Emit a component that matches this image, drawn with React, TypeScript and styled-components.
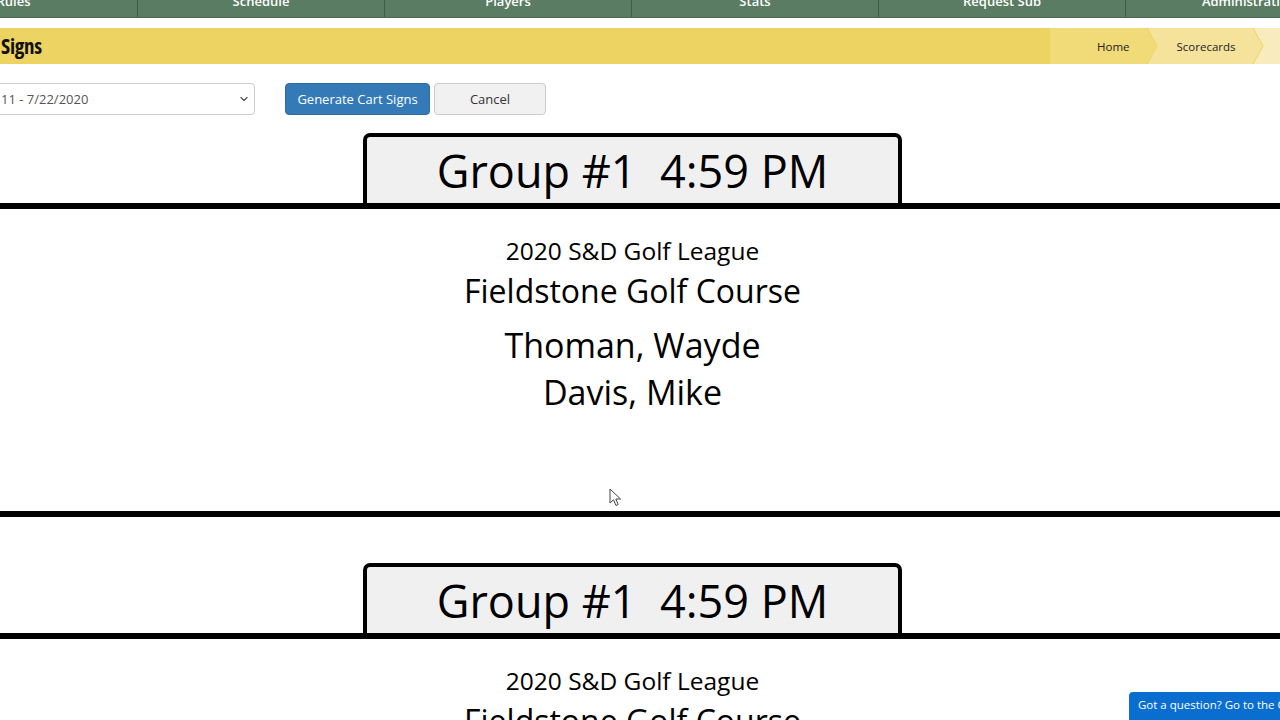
import styled, { createGlobalStyle } from "styled-components"
import { ChevronDown } from "lucide-react"

const GlobalStyle = createGlobalStyle`
    html, body {
        margin: 0;
        padding: 0;
        background: #fff;
        overflow: hidden;
        font-family: "Open Sans", "Liberation Sans", sans-serif;
        color: #111;
    }
`

const navItems = ["Rules", "Schedule", "Players", "Stats", "Request Sub", "Administration"]
const crumbs = [
    { label: "Home", bg: "#f1da78" },
    { label: "Scorecards", bg: "#f5e39c" },
    { label: "Cart Signs", bg: "#f8ebbd" },
]

const signs = [
    { group: 1, time: "4:59 PM", players: ["Thoman, Wayde", "Davis, Mike"] },
    { group: 1, time: "4:59 PM", players: ["Thoman, Wayde", "Davis, Mike"] },
]

export default function App() {
    return (
        <Page>
            <GlobalStyle />
            <Nav>
                {navItems.map((item) => (
                    <NavItem key={item}>{item}</NavItem>
                ))}
            </Nav>
            <TitleBar>
                <Title>Signs</Title>
                <Crumbs>
                    {crumbs.map((c, i) => (
                        <Crumb key={c.label} $bg={c.bg} $first={i === 0}>
                            {c.label}
                        </Crumb>
                    ))}
                </Crumbs>
            </TitleBar>
            <Toolbar>
                <SelectBox>
                    <span>11 - 7/22/2020</span>
                    <ChevronDown size={12} strokeWidth={2.5} color="#555" />
                </SelectBox>
                <Buttons>
                    <Button $primary>Generate Cart Signs</Button>
                    <Button $width={112}>Cancel</Button>
                </Buttons>
            </Toolbar>
            <SignList>
                {signs.map((s, i) => (
                    <Sign key={i}>
                        <TabRow>
                            <Tab>
                                Group #{s.group}&nbsp;&nbsp;{s.time}
                            </Tab>
                        </TabRow>
                        <SignBody>
                            <League>2020 S&amp;D Golf League</League>
                            <Course>Fieldstone Golf Course</Course>
                            <Players>
                                {s.players.map((p) => (
                                    <Player key={p}>{p}</Player>
                                ))}
                            </Players>
                        </SignBody>
                    </Sign>
                ))}
            </SignList>
            <Cursor width="14" height="20" viewBox="0 0 14 20">
                <path d="M1 1 L1 15 L4.5 11.8 L7 17.5 L9.2 16.5 L6.8 11 L11.5 11 Z" fill="#fff" stroke="#444" strokeWidth="1" strokeLinejoin="round" />
            </Cursor>
            <HelpTab>Got a question? Go to the Community</HelpTab>
        </Page>
    )
}

const Page = styled.div`
    width: 1280px;
    height: 720px;
    overflow: hidden;
    position: relative;
`

const Nav = styled.nav`
    display: flex;
    width: 1482px;
    margin-left: -110px;
    height: 17px;
    background: #5a7c62;
    border-bottom: 1px solid #4a6a52;
`

const NavItem = styled.div`
    flex: 0 0 247px;
    height: 17px;
    display: flex;
    align-items: flex-end;
    justify-content: center;
    padding-bottom: 9px;
    box-sizing: border-box;
    line-height: 14px;
    overflow: hidden;
    border-left: 1px solid #3f5e47;
    color: #fff;
    font-size: 13px;
    font-weight: 600;
    &:first-child {
        border-left: none;
    }
`

const TitleBar = styled.div`
    display: flex;
    align-items: stretch;
    height: 36px;
    margin-top: 10px;
    background: #edd462;
`

const Title = styled.h1`
    flex: 1;
    margin: 0;
    padding-left: 1px;
    font-size: 21px;
    font-weight: 700;
    font-stretch: 87%;
    letter-spacing: -0.3px;
    line-height: 36px;
    color: #111;
`

const Crumbs = styled.div`
    flex: 0 0 230px;
    display: flex;
    align-items: stretch;
    overflow: hidden;
`

const Crumb = styled.div<{ $bg: string; $first?: boolean }>`
    flex-shrink: 0;
    display: flex;
    align-items: center;
    padding: 0 27px 0 ${(p) => (p.$first ? 47 : 29)}px;
    margin-left: ${(p) => (p.$first ? 0 : -9)}px;
    background: ${(p) => p.$bg};
    font-size: 11.5px;
    color: #222;
    white-space: nowrap;
    clip-path: ${(p) =>
        p.$first
            ? "polygon(0 0, calc(100% - 10px) 0, 100% 50%, calc(100% - 10px) 100%, 0 100%)"
            : "polygon(0 0, calc(100% - 10px) 0, 100% 50%, calc(100% - 10px) 100%, 0 100%, 10px 50%)"};
`

const Toolbar = styled.div`
    display: flex;
    align-items: center;
    gap: 30px;
    margin-top: 19px;
    height: 32px;
`

const SelectBox = styled.div`
    width: 266px;
    height: 32px;
    margin-left: -11px;
    box-sizing: border-box;
    display: flex;
    align-items: center;
    justify-content: space-between;
    padding: 0 4px 0 11px;
    border: 1px solid #ccc;
    border-radius: 4px;
    font-size: 13px;
    color: #555;
`

const Buttons = styled.div`
    display: flex;
    gap: 4px;
`

const Button = styled.button<{ $primary?: boolean; $width?: number }>`
    height: 32px;
    ${(p) => (p.$width ? `width: ${p.$width}px;` : "width: 145px;")}
    border-radius: 4px;
    border: 1px solid ${(p) => (p.$primary ? "#2e6da4" : "#ccc")};
    background: ${(p) => (p.$primary ? "#337ab7" : "#f1f1f1")};
    color: ${(p) => (p.$primary ? "#fff" : "#333")};
    font-family: "Open Sans", "Liberation Sans", sans-serif;
    font-size: 13px;
`

const SignList = styled.div`
    display: flex;
    flex-direction: column;
    gap: 46px;
    margin-top: 18px;
`

const Sign = styled.section`
    display: flex;
    flex-direction: column;
`

const TabRow = styled.div`
    display: flex;
    justify-content: center;
    padding-right: 15px;
`

const Tab = styled.div`
    width: 539px;
    height: 70px;
    box-sizing: border-box;
    border: 4px solid #000;
    border-bottom: none;
    border-radius: 7px 7px 0 0;
    background: #f0f0f0;
    text-align: center;
    font-size: 45px;
    line-height: 68px;
    color: #000;
    white-space: nowrap;
    overflow: hidden;
`

const SignBody = styled.div`
    height: 314px;
    box-sizing: border-box;
    border-top: 6px solid #000;
    border-bottom: 6px solid #000;
    padding: 25px 15px 0 0;
    text-align: center;
    color: #000;
`

const League = styled.div`
    font-size: 24.5px;
    line-height: 34px;
`

const Course = styled.div`
    font-size: 32px;
    line-height: 45px;
`

const Players = styled.div`
    margin-top: 9px;
`

const Player = styled.div`
    font-size: 34px;
    line-height: 47px;
`

const Cursor = styled.svg`
    position: absolute;
    left: 609px;
    top: 488px;
`

const HelpTab = styled.div`
    position: absolute;
    left: 1129px;
    top: 692px;
    width: 240px;
    height: 30px;
    box-sizing: border-box;
    padding: 5px 9px;
    border-radius: 4px 0 0 0;
    background: #0a6ed1;
    color: #fff;
    font-size: 11.5px;
    white-space: nowrap;
    font-family: "Segoe UI", "Open Sans", sans-serif;
`
